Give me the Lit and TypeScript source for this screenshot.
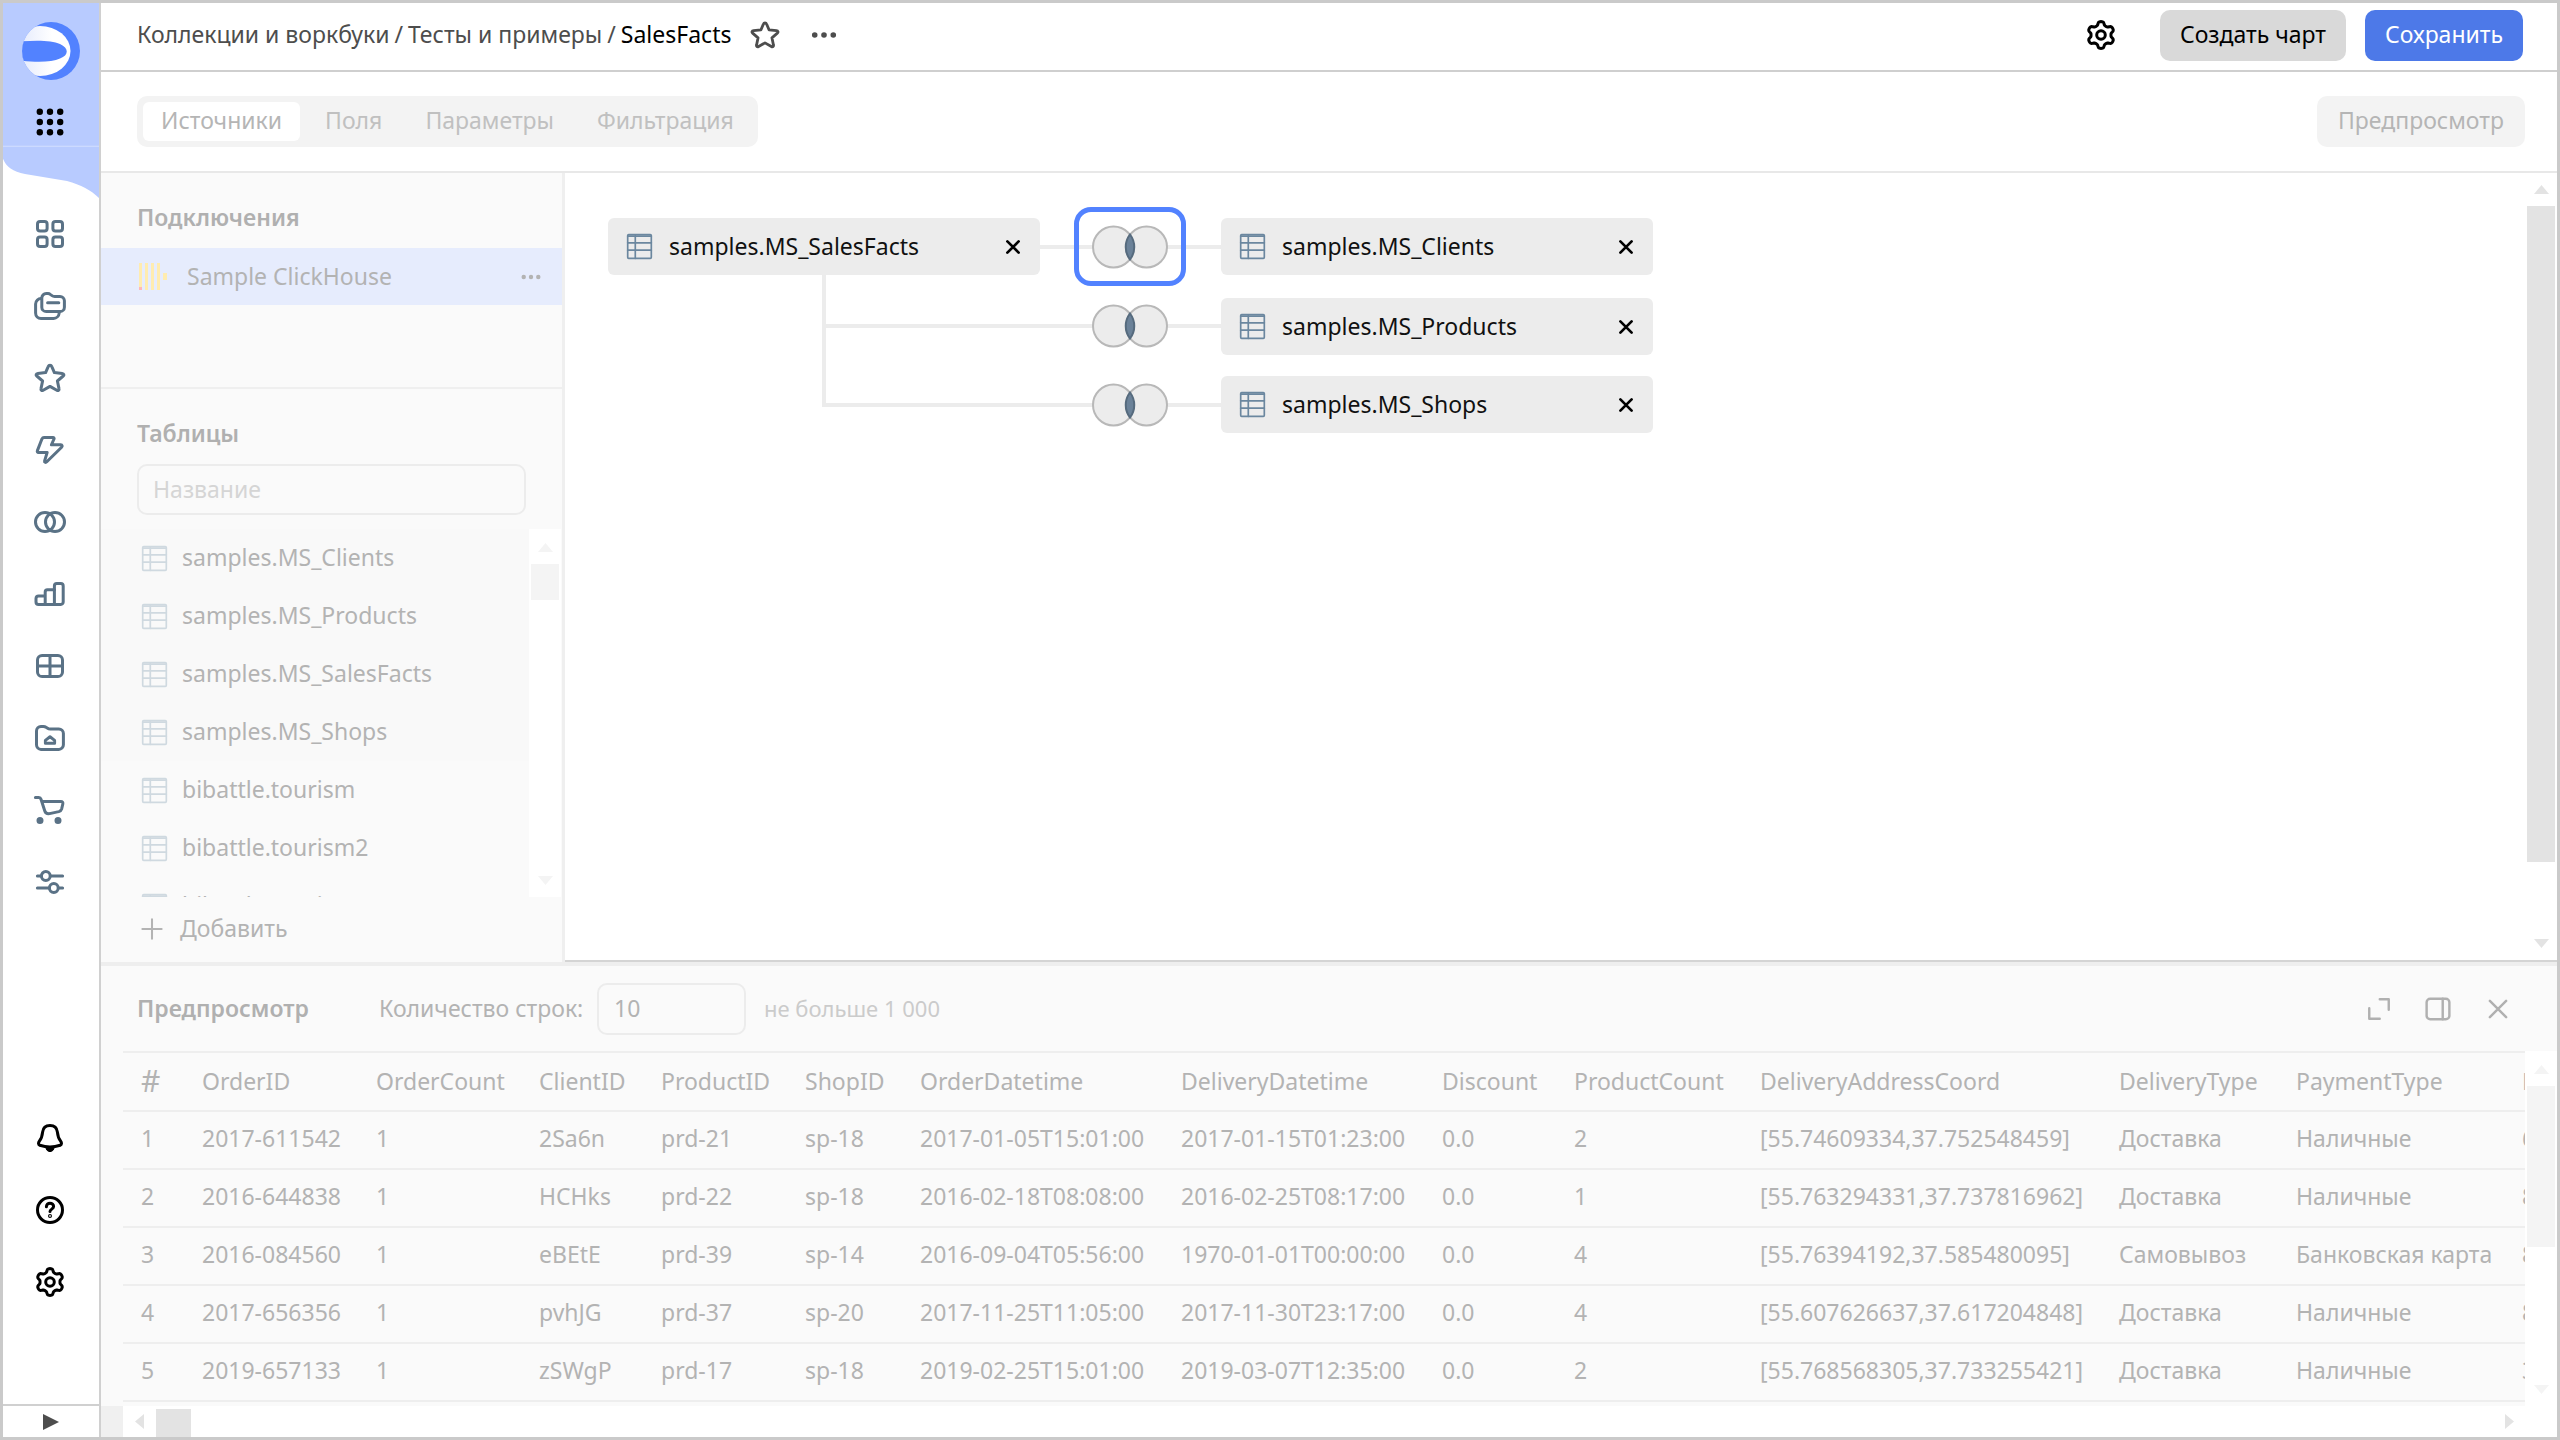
import { LitElement, html, svg, css, nothing } from "lit";
import { customElement, property } from "lit/decorators.js";
import { classMap } from "lit/directives/class-map.js";
import { styleMap } from "lit/directives/style-map.js";

/** Outline of a six-toothed gear around (8, 8). */
const gearOutline = (): string => {
  const steps = 96;
  const points: string[] = [];
  for (let i = 0; i < steps; i++) {
    const a = (i / steps) * Math.PI * 2;
    const r = 5.85 + 0.9 * Math.tanh(1.9 * Math.cos(6 * a));
    points.push(`${(8 + r * Math.sin(a)).toFixed(2)} ${(8 - r * Math.cos(a)).toFixed(2)}`);
  }
  return `M${points.join("L")}Z`;
};

const STAR = "M8 1.6c.4 0 .7.2.9.7l1.3 3 3.9.4c.9.1 1.1.8.5 1.3l-2.9 2.5.8 3.8c.2.8-.4 1.2-1.1.8L8 12.2l-3.4 1.9c-.7.4-1.3 0-1.1-.8l.8-3.8L1.4 7c-.6-.5-.4-1.2.5-1.3l3.9-.4 1.3-3c.2-.5.5-.7.9-.7z";

const ICONS: Record<string, unknown> = {
  grid: svg`<rect x="1.75" y="1.75" width="4.8" height="4.8" rx="1.3"/><rect x="9.45" y="1.75" width="4.8" height="4.8" rx="1.3"/><rect x="1.75" y="9.45" width="4.8" height="4.8" rx="1.3"/><rect x="9.45" y="9.45" width="4.8" height="4.8" rx="1.3"/>`,
  folders: svg`<path d="M3.9 4a2.2 2.2 0 0 1 2.2-2.2h.9c.5 0 .9.2 1.3.5l.7.5c.4.3.8.4 1.3.4h2.7a2.2 2.2 0 0 1 2.2 2.2v3.2a2.2 2.2 0 0 1-2.2 2.2H6.1a2.2 2.2 0 0 1-2.2-2.2z"/><path d="M3.7 4.3A2.7 2.7 0 0 0 .8 7v4.500a2.700 2.700 0 0 0 2.700 2.700h6.300a2.900 2.900 0 0 0 2.800-2.700M6.800 6.400h5.600"/>`,
  star: svg`<path d=${STAR}/>`,
  bolt: svg`<path d="M5 1.800h4.500c.5 0 .7.300.5.700L8.700 5.400h4.700c.700 0 .9.700.4 1.200l-7.400 7.300c-.6.6-1.300.2-1.100-.5l1.300-4.200H2.300c-.6 0-.8-.4-.6-.9l2.300-5.900c.200-.4.500-.6 1-.6z"/>`,
  circles: svg`<circle cx="5.500" cy="8" r="4.750"/><circle cx="10.500" cy="8" r="4.750"/>`,
  chart: svg`<path d="M5.600 13.250H2.300a1.300 1.300 0 0 1-1.300-1.300v-1.700A1.300 1.300 0 0 1 2.300 9h3.300M5.600 13.250V7a1.100 1.100 0 0 1 1.100-1.100h3.500M5.600 13.250h4.600"/><path d="M10.200 13.250V4a1.200 1.200 0 0 1 1.200-1.200h2a1.200 1.200 0 0 1 1.200 1.200v8a1.200 1.200 0 0 1-1.200 1.200z"/>`,
  table: svg`<rect x="1.750" y="2.750" width="12.500" height="10.500" rx="2.300"/><path d="M8 2.750v10.500M1.750 8h12.500"/>`,
  home: svg`<path d="M1.250 4.500A2.300 2.300 0 0 1 3.500 2.200h1.200c.5 0 .9.100 1.300.4l.8.5c.4.300.8.4 1.300.4h4.300a2.300 2.300 0 0 1 2.300 2.300v5.600a2.300 2.300 0 0 1-2.300 2.300H3.500a2.300 2.300 0 0 1-2.250-2.300z"/><path d="M5.700 10.600V9.200L8 7.400l2.300 1.800v1.400z"/>`,
  cart: svg`<path d="M.7 1.800h1.700c.6 0 .9.200 1.100.8l1.900 5.900c.4 1.200 1.200 1.500 2.400 1.300l4.600-1c.8-.2 1.200-.5 1.400-1.200l.6-2.600c.200-.8-.2-1.300-1-1.300H3.900"/><circle class="solid" cx="3" cy="13.200" r="1"/><circle class="solid" cx="12" cy="13.200" r="1"/>`,
  sliders: svg`<path d="M1.700 5h2M8.200 5h6.100M1.700 11h6M12.200 11h2.100"/><circle cx="5.900" cy="5" r="2.200"/><circle cx="9.900" cy="11" r="2.200"/>`,
  bell: svg`<path d="M8 1.750c-2.300 0-3.500 1.500-3.700 3.300-.2 1.900-.4 3-1.500 4.300-.8 1-.7 2 .1 2.300 3.100 1 7.100 1 10.200 0 .8-.3.900-1.300.1-2.300-1.100-1.300-1.300-2.400-1.500-4.300C11.500 3.250 10.300 1.750 8 1.750z"/><path class="solid" stroke-width="0.500" d="M5.900 12.600h4.200c-.1 1.400-1 2.200-2.100 2.200s-2-.8-2.100-2.200z"/>`,
  help: svg`<circle cx="8" cy="8" r="6.250"/><path d="M6.200 6.400c0-1.100.8-1.800 1.800-1.800s1.800.7 1.800 1.700c0 1.200-1.800 1.300-1.800 2.500"/><circle class="solid" cx="8" cy="11" r=".25"/>`,
  gear: svg`<path d=${gearOutline()}/><circle cx="8" cy="8" r="2.150"/>`,
  dots: svg`<g class="fill"><circle cx="2.700" cy="8" r="1.600"/><circle cx="8" cy="8" r="1.600"/><circle cx="13.300" cy="8" r="1.600"/></g>`,
  apps: svg`<g class="fill">${[2.9, 8, 13.1].map((x) => [2.9, 8, 13.1].map((y) => svg`<circle cx=${x} cy=${y} r="1.600"/>`))}</g>`,
  sheet: svg`<g stroke-width="1"><rect x="1" y="1" width="14" height="14" rx=".6"/><path d="M1 1.800h14M1 5.800h14M1 10.200h14M5.500 1.500V15"/></g>`,
  close: svg`<path d="M3 3l10 10M13 3L3 13"/>`,
  plus: svg`<path d="M8 1v14M1 8h14"/>`,
  expand: svg`<path d="M8.500 1.500h6v7M1.500 7.500v7h7"/>`,
  panel: svg`<rect x="1" y="1.700" width="14" height="12.600" rx="2.200"/><path d="M10.900 1.700v12.600"/>`,
};

@customElement("ui-icon")
export class UiIcon extends LitElement {
  @property() name = "";
  @property({ type: Number }) size = 32;
  @property({ type: Number }) weight = 1.5;

  static styles = css`
    :host { display: inline-flex; flex: none; }
    svg { display: block; fill: none; stroke: currentColor; stroke-linecap: round; stroke-linejoin: round; overflow: visible; }
    .solid { fill: currentColor; }
    .fill { fill: currentColor; stroke: none; }
  `;

  render() {
    return html`<svg width=${this.size} height=${this.size} viewBox="0 0 16 16" stroke-width=${this.weight} aria-hidden="true">${ICONS[this.name] ?? nothing}</svg>`;
  }
}

@customElement("app-nav")
export class AppNav extends LitElement {
  private main: [string, string][] = [
    ["grid", "Воркбуки"], ["folders", "Коллекции"], ["star", "Избранное"], ["bolt", "Подключения"],
    ["circles", "Датасеты"], ["chart", "Чарты"], ["table", "Дашборды"], ["home", "Личная папка"],
    ["cart", "Маркетплейс"], ["sliders", "Настройки сервиса"],
  ];
  private extra: [string, string][] = [["bell", "Уведомления"], ["help", "Помощь"], ["gear", "Настройки"]];

  static styles = css`
    :host { display: flex; flex-direction: column; flex: none; width: 96px; background: #fff; border-right: 2px solid #d0d0d0; }
    a, button { color: inherit; border: 0; padding: 0; margin: 0; background: none; display: flex; align-items: center; justify-content: center; }
    .head { position: relative; height: 195px; display: flex; flex-direction: column; align-items: center; gap: 26px; padding-top: 19px; box-sizing: border-box; }
    .wave { position: absolute; inset: 0; width: 100%; height: 100%; display: block; }
    .logo, .apps { position: relative; }
    .apps { padding-right: 2px; }
    .logo svg { display: block; }
    nav { display: flex; flex-direction: column; color: #5a7286; }
    nav a { height: 72px; padding-right: 2px; }
    .bottom { margin-top: auto; color: #000; padding-bottom: 86px; }
    .expand { height: 33px; border-top: 2px solid #d0d0d0; color: #4d4d4d; }
  `;

  render() {
    const link = ([icon, label]: [string, string]) => html`<a href="#${icon}" aria-label=${label}><ui-icon name=${icon}></ui-icon></a>`;
    return html`
      <div class="head">
        <svg class="wave" viewBox="0 0 96 194" preserveAspectRatio="none" aria-hidden="true">
          <path fill="#b8cbff" d="M0 0H96V194C88 186 78 181 64 177L22 170C10 168 3 163 0 155Z"/>
          <path stroke="#d3dfff" d="M0 142.500H96"/>
        </svg>
        <a class="logo" href="#main" aria-label="DataLens">
          <svg width="58" height="58" viewBox="22 22 58 58">
            <defs>
              <clipPath id="disc"><circle cx="51" cy="51" r="29"/></clipPath>
              <linearGradient id="shade"><stop offset="0" stop-color="#dde4fb"/><stop offset=".7" stop-color="#fff"/></linearGradient>
            </defs>
            <circle cx="51" cy="51" r="29" fill="#5282ff"/>
            <g clip-path="url(#disc)">
              <ellipse cx="40" cy="51" rx="30.500" ry="25" fill="url(#shade)"/>
              <path fill="#5282ff" d="M20 41.500C38 40 52 40.500 60 44C69 48 69 55 60 58.500C52 62 38 62.500 20 60.500Z"/>
            </g>
          </svg>
        </a>
        <button class="apps" aria-label="Сервисы"><ui-icon name="apps" size="32"></ui-icon></button>
      </div>
      <nav>${this.main.map(link)}</nav>
      <nav class="bottom">${this.extra.map(link)}</nav>
      <button class="expand" aria-label="Развернуть меню"><svg width="18" height="18" aria-hidden="true"><path fill="currentColor" d="M1 1L17 9L1 17Z"/></svg></button>
    `;
  }
}

@customElement("scroll-bar")
export class ScrollBar extends LitElement {
  @property({ type: Boolean, reflect: true }) horizontal = false;
  @property({ type: Number }) thumb = 10;

  static styles = css`
    :host { display: flex; flex: none; flex-direction: column; align-items: center; background: #fff; color: #e3e3e3; width: 32px; padding: 12px 0; box-sizing: border-box; }
    :host([horizontal]) { flex-direction: row; width: auto; height: 31px; padding: 0 12px; }
    svg { display: block; flex: none; }
    .track { flex: 1; align-self: stretch; display: flex; flex-direction: column; padding: 12px 2px; }
    :host([horizontal]) .track { flex-direction: row; padding: 3px 12px 0; }
    .thumb { background: currentColor; flex: none; }
  `;

  render() {
    const h = this.horizontal;
    const size = styleMap(h ? { width: `${this.thumb}%` } : { height: `${this.thumb}%` });
    return html`
      <svg width=${h ? 9 : 15} height=${h ? 15 : 9} aria-hidden="true"><path fill="currentColor" d=${h ? "M9 0V15L0 7.500Z" : "M0 9H15L7.500 0Z"}/></svg>
      <div class="track"><div class="thumb" style=${size}></div></div>
      <svg width=${h ? 9 : 15} height=${h ? 15 : 9} aria-hidden="true"><path fill="currentColor" d=${h ? "M0 0V15L9 7.500Z" : "M0 0H15L7.500 9Z"}/></svg>
    `;
  }
}

interface Node { name: string; x: number; y: number }

@customElement("join-canvas")
export class JoinCanvas extends LitElement {
  private nodes: Node[] = [
    { name: "samples.MS_SalesFacts", x: 43, y: 45 },
    { name: "samples.MS_Clients", x: 656, y: 45 },
    { name: "samples.MS_Products", x: 656, y: 125 },
    { name: "samples.MS_Shops", x: 656, y: 203 },
  ];
  private joins = [74, 153, 232];

  static styles = css`
    :host { display: flex; flex: 1; min-width: 0; background: #fff; }
    .board { position: relative; flex: 1; min-width: 0; overflow: hidden; }
    .links { position: absolute; left: 0; top: 0; }
    .node { position: absolute; display: flex; align-items: center; width: 432px; height: 57px; box-sizing: border-box; padding: 0 18px; border-radius: 6px; background: #ececec; color: #111; }
    .node ui-icon { color: #6b879f; }
    .name { flex: 1; padding: 0 0 2px 16px; }
    button { display: flex; padding: 0; margin: 0; border: 0; background: none; color: #000; font: inherit; }
    .node button ui-icon { color: #000; }
    .join { position: absolute; left: 509px; width: 112px; height: 79px; box-sizing: border-box; border: 5px solid transparent; border-radius: 17px; align-items: center; justify-content: center; }
    .selected { border-color: #5282ff; }
  `;

  render() {
    return html`
      <div class="board">
        <svg class="links" width="660" height="240" fill="none" stroke="#ececec" stroke-width="4" aria-hidden="true">
          <path d="M475 74H656M259 102V232M257 153H656M257 232H656"/>
        </svg>
        ${this.nodes.map((n) => html`
          <div class="node" style=${styleMap({ left: `${n.x}px`, top: `${n.y}px` })}>
            <ui-icon name="sheet" size="27"></ui-icon>
            <span class="name">${n.name}</span>
            <button aria-label="Удалить ${n.name}"><ui-icon name="close" size="18" weight="2.400"></ui-icon></button>
          </div>`)}
        ${this.joins.map((y, i) => html`
          <button class=${classMap({ join: true, selected: i === 0 })} style=${styleMap({ top: `${y - 40}px` })} aria-label="Связь ${i + 1}">
            <svg width="76" height="44" viewBox="0 0 76 44" fill="#ececec" stroke="#b8b8b8" stroke-width="2" aria-hidden="true">
              <circle cx="21.500" cy="22" r="20.500"/><circle cx="54.500" cy="22" r="20.500"/>
              <path fill="#6b8299" stroke="#566b7e" d="M38 9.500A20.500 20.500 0 0 1 38 34.500A20.500 20.500 0 0 1 38 9.500Z"/>
            </svg>
          </button>`)}
      </div>
      <scroll-bar thumb="91"></scroll-bar>
    `;
  }
}

@customElement("source-panel")
export class SourcePanel extends LitElement {
  private tables = ["samples.MS_Clients", "samples.MS_Products", "samples.MS_SalesFacts", "samples.MS_Shops", "bibattle.tourism", "bibattle.tourism2", "bibattle.tourism3"];

  static styles = css`
    :host { display: flex; flex-direction: column; flex: none; width: 461px; background: #fafafa; border-right: 3px solid #efefef; color: #b3b3b3; }
    h2 { margin: 0; font-size: 23px; line-height: 32px; font-weight: 600; color: #b0b0b0; padding-left: 36px; }
    .connections { height: 216px; box-sizing: border-box; padding-top: 28px; border-bottom: 2px solid #efefef; }
    .connection { display: flex; align-items: center; height: 57px; margin-top: 15px; padding: 0 20px 0 36px; background: #e6ecfd; }
    .connection span { flex: 1; padding: 0 0 2px 20px; }
    button { display: flex; align-items: center; padding: 0; margin: 0; border: 0; background: none; color: inherit; font: inherit; }
    .tables { display: flex; flex-direction: column; flex: 1; min-height: 0; padding-top: 28px; }
    input { flex: none; height: 51px; margin: 15px 36px 14px; box-sizing: border-box; padding: 0 14px 2px; border: 2px solid #ececec; border-radius: 10px; background: transparent; color: inherit; font: inherit; }
    input::placeholder { color: #d5d5d5; opacity: 1; }
    .scroll { display: flex; flex: 1; min-height: 0; padding-right: 1px; }
    .scroll scroll-bar { color: #f4f4f4; padding-top: 14px; }
    ul { list-style: none; margin: 0; padding: 0; flex: 1; overflow: hidden; }
    li { display: flex; align-items: center; height: 58px; padding-left: 40px; box-sizing: border-box; }
    li span { padding: 0 0 2px 14px; }
    li.used { background: #f9f9f9; }
    li ui-icon { color: #cfd9e0; }
    .add { height: 65px; flex: none; padding: 0 0 2px 40px; }
    .add span { padding: 0 0 2px 17px; }
  `;

  render() {
    return html`
      <section class="connections">
        <h2>Подключения</h2>
        <div class="connection">
          <svg width="30" height="28" aria-hidden="true">
            <path fill="#ffecb0" d="M2 0h3v24h-3zM8 0h3v27h-3zM14 0h3v27h-3zM20 0h3v27h-3zM26 10h4v7h-4z"/><path fill="#ffb8b8" d="M2 24h3v3h-3z"/>
          </svg>
          <span>Sample ClickHouse</span>
          <button aria-label="Действия"><ui-icon name="dots" size="22"></ui-icon></button>
        </div>
      </section>
      <section class="tables">
        <h2>Таблицы</h2>
        <input type="text" placeholder="Название" aria-label="Название таблицы">
        <div class="scroll">
          <ul>${this.tables.map((t, i) => html`<li class=${classMap({ used: i < 4 })}><ui-icon name="sheet" size="27"></ui-icon><span>${t}</span></li>`)}</ul>
          <scroll-bar thumb="12"></scroll-bar>
        </div>
        <button class="add"><ui-icon name="plus" size="22" weight="1.500"></ui-icon><span>Добавить</span></button>
      </section>
    `;
  }
}

@customElement("preview-panel")
export class PreviewPanel extends LitElement {
  private columns: [string, number][] = [
    ["#", 61], ["OrderID", 174], ["OrderCount", 163], ["ClientID", 122], ["ProductID", 144], ["ShopID", 115],
    ["OrderDatetime", 261], ["DeliveryDatetime", 261], ["Discount", 132], ["ProductCount", 186],
    ["DeliveryAddressCoord", 359], ["DeliveryType", 177], ["PaymentType", 226], ["ProductPrice", 180],
  ];
  private rows = [
    ["1", "2017-611542", "1", "2Sa6n", "prd-21", "sp-18", "2017-01-05T15:01:00", "2017-01-15T01:23:00", "0.0", "2", "[55.74609334,37.752548459]", "Доставка", "Наличные", "6"],
    ["2", "2016-644838", "1", "HCHks", "prd-22", "sp-18", "2016-02-18T08:08:00", "2016-02-25T08:17:00", "0.0", "1", "[55.763294331,37.737816962]", "Доставка", "Наличные", "8"],
    ["3", "2016-084560", "1", "eBEtE", "prd-39", "sp-14", "2016-09-04T05:56:00", "1970-01-01T00:00:00", "0.0", "4", "[55.76394192,37.585480095]", "Самовывоз", "Банковская карта", "8"],
    ["4", "2017-656356", "1", "pvhJG", "prd-37", "sp-20", "2017-11-25T11:05:00", "2017-11-30T23:17:00", "0.0", "4", "[55.607626637,37.617204848]", "Доставка", "Наличные", "8"],
    ["5", "2019-657133", "1", "zSWgP", "prd-17", "sp-18", "2019-02-25T15:01:00", "2019-03-07T12:35:00", "0.0", "2", "[55.768568305,37.733255421]", "Доставка", "Наличные", "3"],
  ];

  static styles = css`
    :host { display: block; background: #fafafa; border-top: 4px solid #eee; color: #b3b3b3; }
    .bar { display: flex; align-items: center; height: 85px; padding: 0 46px 0 36px; }
    h2 { margin: 0; width: 242px; font-size: 23px; font-weight: 600; color: #b0b0b0; }
    h2, label, .hint { padding-bottom: 2px; }
    label { width: 218px; white-space: nowrap; }
    input { width: 149px; height: 52px; box-sizing: border-box; padding: 0 15px 2px; border: 2px solid #ececec; border-radius: 10px; background: transparent; color: inherit; font: inherit; }
    .hint { padding-left: 18px; color: #cbcbcb; font-size: 22px; }
    .tools { display: flex; align-items: center; gap: 34px; margin-left: auto; }
    button { display: flex; padding: 0; margin: 0; border: 0; background: none; color: #b0b0b0; }
    .body { display: flex; height: 355px; }
    .view { flex: 1; min-width: 0; margin-left: 22px; overflow: hidden; }
    .body scroll-bar { color: #f4f4f4; padding-top: 14px; }
    table { border-collapse: separate; border-spacing: 0; table-layout: fixed; width: 100%; }
    th, td { box-sizing: border-box; padding: 0 0 5px 18px; text-align: left; font-weight: 400; white-space: nowrap; border-bottom: 2px solid #eee; }
    th { height: 61px; border-top: 2px solid #eee; padding-bottom: 1px; }
    th:first-child { font-size: 30px; }
    td { height: 58px; }
    .foot { display: flex; padding-left: 22px; background: #f0f0f0; }
    .foot scroll-bar { flex: 1; padding-right: 43px; }
  `;

  render() {
    const total = this.columns.reduce((sum, [, w]) => sum + w, 0);
    return html`
      <div class="bar">
        <h2>Предпросмотр</h2>
        <label for="count">Количество строк:</label>
        <input id="count" type="text" value="10">
        <span class="hint">не больше 1 000</span>
        <div class="tools">
          <button aria-label="Развернуть"><ui-icon name="expand" size="24" weight="1.600"></ui-icon></button>
          <button aria-label="Сбоку"><ui-icon name="panel" size="26" weight="1.500"></ui-icon></button>
          <button aria-label="Закрыть"><ui-icon name="close" size="26" weight="1.500"></ui-icon></button>
        </div>
      </div>
      <div class="body">
        <div class="view">
          <table style=${styleMap({ width: `${total}px` })}>
            <colgroup>${this.columns.map(([, w]) => html`<col style=${styleMap({ width: `${w}px` })}>`)}</colgroup>
            <thead><tr>${this.columns.map(([c]) => html`<th scope="col">${c}</th>`)}</tr></thead>
            <tbody>${this.rows.map((r) => html`<tr>${r.map((c) => html`<td>${c}</td>`)}</tr>`)}</tbody>
          </table>
        </div>
        <scroll-bar thumb="56"></scroll-bar>
      </div>
      <div class="foot"><scroll-bar horizontal thumb="1.500"></scroll-bar></div>
    `;
  }
}

@customElement("app-root")
export class AppRoot extends LitElement {
  static styles = css`
    :host { display: block; font: 23px/32px "Noto Sans", "Liberation Sans", sans-serif; color: #000; }
    .frame { display: flex; height: 100vh; box-sizing: border-box; border: 3px solid #cacaca; background: #fff; }
    .page { display: flex; flex-direction: column; flex: 1; min-width: 0; }
    button { display: flex; align-items: center; justify-content: center; margin: 0; padding: 0; border: 0; background: none; color: inherit; font: inherit; }
    header { display: flex; align-items: center; height: 67px; flex: none; padding: 0 34px 0 36px; border-bottom: 2px solid #cfcfcf; }
    header > * { margin-bottom: 3px; }
    .crumbs { display: flex; align-items: center; gap: 5px; color: #4d4d4d; padding-bottom: 2px; }
    .crumbs a { color: inherit; text-decoration: none; }
    .crumbs .current { color: #000; }
    .star { margin-left: 19px; color: #4d4d4d; }
    .more { margin-left: 30px; color: #4d4d4d; }
    .settings { margin-left: auto; }
    .btn { height: 51px; padding: 0 16px 3px; border-radius: 10px; }
    .create { margin-left: 43px; background: #d9d9d9; min-width: 186px; }
    .save { margin-left: 19px; background: #4d79e8; color: #fff; min-width: 158px; }
    .toolbar { display: flex; align-items: center; justify-content: space-between; height: 99px; flex: none; padding: 0 32px 0 36px; border-bottom: 2px solid #e8e8e8; color: #b5b5b5; }
    .tabs { display: flex; align-items: center; gap: 7px; height: 51px; padding: 0 6px; box-sizing: border-box; border-radius: 10px; background: #f3f3f3; }
    .tabs button { height: 39px; padding: 0 18px 3px; border-radius: 6px; color: #c0c0c0; }
    .tabs .active { background: #fff; color: #b5b5b5; }
    .preview { background: #f3f3f3; min-width: 208px; }
    .work { display: flex; flex: 1; min-height: 0; }
    join-canvas { border-bottom: 2px solid #d4d4d4; }
  `;

  render() {
    const tabs = ["Источники", "Поля", "Параметры", "Фильтрация"];
    return html`
      <div class="frame">
        <app-nav></app-nav>
        <div class="page">
          <header>
            <div class="crumbs">
              <a href="#collections">Коллекции и воркбуки</a><span>/</span>
              <a href="#examples">Тесты и примеры</a><span>/</span>
              <span class="current">SalesFacts</span>
            </div>
            <button class="star" aria-label="В избранное"><ui-icon name="star" size="30"></ui-icon></button>
            <button class="more" aria-label="Ещё"><ui-icon name="dots" size="28"></ui-icon></button>
            <button class="settings" aria-label="Настройки"><ui-icon name="gear" size="32"></ui-icon></button>
            <button class="btn create">Создать чарт</button>
            <button class="btn save">Сохранить</button>
          </header>
          <div class="toolbar">
            <div class="tabs">${tabs.map((t, i) => html`<button class=${classMap({ active: i === 0 })}>${t}</button>`)}</div>
            <button class="btn preview">Предпросмотр</button>
          </div>
          <div class="work">
            <source-panel></source-panel>
            <join-canvas></join-canvas>
          </div>
          <preview-panel></preview-panel>
        </div>
      </div>
    `;
  }
}
